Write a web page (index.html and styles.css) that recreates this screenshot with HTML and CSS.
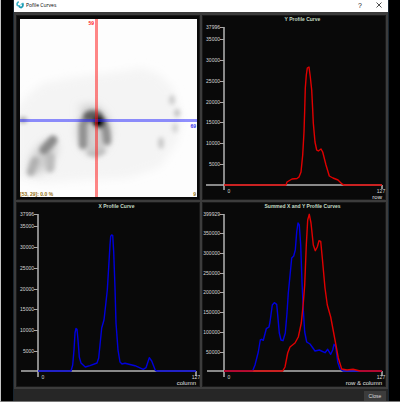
FILE: index.html
```html
<!DOCTYPE html>
<html lang="en">
<head>
<meta charset="utf-8">
<title>Pofile Curves</title>
<link rel="stylesheet" href="styles.css">
</head>
<body>
<div class="window">
  <header class="titlebar">
    <svg class="logo" viewBox="0 0 8 8" aria-hidden="true">
      <path d="M2.800.8C.9 1.600.6 3.600 1.900 5" fill="none" stroke="#3fb4c8" stroke-width="1.700"/>
      <path d="M2.600 4.200C3 5.600 4 6.300 5.200 6.600 6.800 5.600 7.300 3.800 6.600 2.200" fill="none" stroke="#1a9cb4" stroke-width="1.700"/>
      <path d="M4.600 4.200 6.400 1.800" stroke="#4cc0d0" stroke-width="1"/>
    </svg>
    <h1>Pofile Curves</h1>
    <button class="tool" type="button" aria-label="Help">?</button>
    <button class="tool" type="button" aria-label="Close window"><svg viewBox="0 0 6 6" width="6" height="6"><path d="M.5.5 5.500 5.500M5.500.5.5 5.500" stroke="#222" stroke-width=".8"/></svg></button>
  </header>
  <main class="grid">
    <figure class="panel">
      <svg class="plot" viewBox="0 0 184 185">
        <defs>
          <clipPath id="scan"><rect x="4" y="4" width="177" height="178"/></clipPath>
          <filter id="b1" x="-100%" y="-100%" width="300%" height="300%"><feGaussianBlur stdDeviation="2.300"/></filter>
          <filter id="b2" x="-50%" y="-50%" width="200%" height="200%"><feGaussianBlur stdDeviation="4"/></filter>
        </defs>
        <rect x="4" y="4" width="177" height="178" fill="#fdfdfd"/>
        <g clip-path="url(#scan)">
          <path filter="url(#b2)" fill="#f4f4f4" d="M0 94 14 78 27 68 61 62 94 58 127 53 144 60 157 73 164 95 166 105 161 128 144 152 111 163 61 165 27 168 0 162z"/>
          <g filter="url(#b2)">
            <ellipse cx="78" cy="116" rx="17" ry="23" fill="#bbb" opacity=".7"/>
            <ellipse cx="27" cy="142" rx="10" ry="20" fill="#c4c4c4" opacity=".8" transform="rotate(35 27 142)"/>
            <ellipse cx="73" cy="93" rx="11" ry="3" fill="#ccc"/>
          </g>
          <g filter="url(#b1)">
            <path d="M37 125 28 135" stroke="#8a8a8a" stroke-width="9" stroke-linecap="round"/>
            <path d="M19 146 15 157" stroke="#b0b0b0" stroke-width="8" stroke-linecap="round"/>
            <path d="M34 142 34 153" stroke="#bcbcbc" stroke-width="9" stroke-linecap="round"/>
            <path d="M67 130V110Q70 100 80 102T91 126" fill="none" stroke="#909090" stroke-width="8" stroke-linecap="round"/>
            <path d="M72 136Q80 142 88 134" fill="none" stroke="#c0c0c0" stroke-width="7"/>
            <ellipse cx="79" cy="123" rx="4" ry="9" fill="#d4d4d4"/>
            <ellipse cx="77" cy="101" rx="10" ry="6" fill="#505050" opacity=".8"/>
            <circle cx="83" cy="107" r="6" fill="#000"/>
            <ellipse cx="7" cy="105" rx="4" ry="3" fill="#aaa"/>
            <ellipse cx="156" cy="85" rx="3" ry="5" fill="#ccc"/>
            <ellipse cx="161" cy="98" rx="3" ry="4" fill="#c4c4c4"/>
            <ellipse cx="159" cy="113" rx="3" ry="5" fill="#d4d4d4"/>
            <ellipse cx="145" cy="128" rx="3" ry="6" fill="#c8c8c8"/>
          </g>
        </g>
        <rect x="4" y="104" width="177" height="3" fill="#2222ff" opacity=".5"/>
        <rect x="79" y="4" width="3" height="178" fill="#ff1010" opacity=".5"/>
        <g class="mark">
          <text class="red end" x="78" y="10">59</text>
          <text class="blue end" x="180" y="113">69</text>
          <text class="gold" x="4" y="181">[53, 29]: 0.0 %</text>
          <text class="gold end" x="180" y="181">9</text>
        </g>
      </svg>
    </figure>

    <figure class="panel">
      <figcaption>Y Profile Curve</figcaption>
      <svg class="plot" viewBox="0 10 184 175">
        <path class="axis" d="M4 170H180M22 12V175M180 170V174"/>
        <path class="tick" d="M18 12.500H22M18 24.500H22M18 45.500H22M18 66.500H22M18 87.500H22M18 107.500H22M18 128.500H22M18 149.500H22"/>
        <g class="label end">
          <text x="18" y="14">37996</text><text x="18" y="26">35000</text><text x="18" y="47">30000</text><text x="18" y="68">25000</text>
          <text x="18" y="89">20000</text><text x="18" y="109">15000</text><text x="18" y="130">10000</text><text x="18" y="151">5000</text>
        </g>
        <g class="label mid"><text x="27" y="178">0</text><text x="179" y="178">127</text></g>
        <text class="unit end" x="180" y="184">row</text>
        <polyline class="curve y" points="22,170 84,170 85,167 90,164 95,163.500 97,162 99,157 100.700,140 102,117 102.700,95 103.300,73 104.300,60 105.300,53 107,52 108.300,62 109.700,75 110.700,95 111.300,108 113,127 114.700,135 116.300,136 119,134 120.700,137 124,150 127.300,161 131,163 136,165 140,169 142,170 180,170"/>
      </svg>
    </figure>

    <figure class="panel">
      <figcaption>X Profile Curve</figcaption>
      <svg class="plot" viewBox="0 10 184 175">
        <path class="axis" d="M5 169H180M22 12V175M180 169V174"/>
        <path class="tick" d="M18 12.500H22M18 24.500H22M18 45.500H22M18 66.500H22M18 87.500H22M18 107.500H22M18 128.500H22M18 149.500H22"/>
        <g class="label end">
          <text x="18" y="14">37996</text><text x="18" y="26">35000</text><text x="18" y="47">30000</text><text x="18" y="68">25000</text>
          <text x="18" y="89">20000</text><text x="18" y="109">15000</text><text x="18" y="130">10000</text><text x="18" y="151">5000</text>
        </g>
        <g class="label mid"><text x="27" y="177">0</text><text x="180" y="177">127</text></g>
        <text class="unit end" x="180" y="183">column</text>
        <polyline class="curve x" points="22,169 55,169 56.700,163 58,148 59,131 60,126.500 61,127.300 62,138 63.300,155 65,161 69.300,165 74,163.700 81,161 82.700,156 84,143 85.700,126 88,118 90,100 91.300,88 92.700,65 94,43 94.700,34.300 95.700,33 96.700,33.300 97.700,50 99,86 100,121 102,148 104,160 106,162 109,161.300 119,163.700 127.300,167.300 130,165.700 133.300,155.700 135.700,159 139.300,168.300 141,169 180,169"/>
      </svg>
    </figure>

    <figure class="panel">
      <figcaption>Summed X and Y Profile Curves</figcaption>
      <svg class="plot" viewBox="0 10 184 175">
        <path class="tick" d="M18 12.500H22M18 31.500H22M18 51.500H22M18 71.500H22M18 90.500H22M18 110.500H22M18 130.500H22M18 150.500H22"/>
        <g class="label end">
          <text x="18" y="14">399929</text><text x="18" y="33">350000</text><text x="18" y="53">300000</text><text x="18" y="73">250000</text>
          <text x="18" y="92">200000</text><text x="18" y="112">150000</text><text x="18" y="132">100000</text><text x="18" y="152">50000</text>
        </g>
        <path class="axis" d="M5 169H180M22 12V175M180 169V174"/>
        <g class="label mid"><text x="27" y="177">0</text><text x="179" y="177">127</text></g>
        <text class="unit end" x="180" y="183">row &amp; column</text>
        <polyline class="curve x" points="22,169 50.700,168.700 53,163 56.300,150 58.300,138 59.700,137.300 61.300,138.300 64.300,126.700 67,125 68,120 70.300,103 72.300,100.700 74.700,102.300 75.700,113 77.300,131 79,138 81,138.700 83.300,131 85,111 86.300,91 87.300,81 89.700,56 91.700,54 93.300,48 94.700,30 96,21 97.300,23 98.700,43 100,80 101.300,108 102.700,130 104.700,140 108,142 113,149 117.300,148 123,150.700 125.700,147.300 128.700,152.300 130.700,148 132,142.300 133.700,144.700 135.700,160 138,167 141,169 180,169"/>
        <polyline class="curve y" points="22,169 80.700,169 83,165 85.700,151 88,145 93,141 96.300,135 99.300,121 101.300,101 102.700,83 104.300,43 105.700,18 107.300,12.300 109,21 111.300,43 113.300,48.700 115.300,45 117,38.700 118.700,39.300 120.300,56 123,86 125.300,103 128.700,115 133,138 136.300,156 139.700,167 145,168 151,167.300 158,169 180,169"/>
      </svg>
    </figure>
  </main>
  <footer class="footer"><button class="close" type="button">Close</button></footer>
</div>
</body>
</html>
```

FILE: styles.css
```css
* { box-sizing: border-box; }

body {
  margin: 0;
  padding: 0 11px 0 12px;
  background: #000;
  border-left: 1px solid #c4c4c4;
  border-bottom: 1px solid #777;
  font-family: "Liberation Sans", sans-serif;
  font-size: 5px;
}

.window {
  border: solid #182530;
  border-width: 0 1px;
  background: #3c3c3c;
}

.titlebar {
  display: flex;
  align-items: center;
  height: 12px;
  padding: 0 6px 2px 2px;
  background: #fff;
}

.logo { width: 8px; height: 8px; margin-right: 2px; }

h1 {
  flex: 1;
  margin: 0;
  font: 5px/10px "Open Sans", sans-serif;
  color: #000;
}

button {
  padding: 0;
  border: 0;
  font-family: inherit;
}

.tool {
  display: flex;
  align-items: center;
  justify-content: center;
  width: 6px;
  height: 10px;
  margin-left: 13px;
  background: none;
  font-size: 7px;
  color: #222;
}

.grid {
  display: grid;
  grid-template-columns: 1fr 1fr;
  gap: 2px;
  padding: 3px 2px 2px;
}

.panel {
  margin: 0;
  background: #090909;
  box-shadow: inset 0 0 0 1px #191919;
}

figcaption {
  height: 10px;
  padding-left: 17px;
  text-align: center;
  font-weight: bold;
  line-height: 9px;
  color: #c4dcc4;
}

.plot { display: block; width: 100%; }

.axis { fill: none; stroke: #b4b4b4; stroke-width: 1.5; }
.tick { fill: none; stroke: #a8a8a8; stroke-width: 1; }
.label { font-size: 5px; fill: #d8d8d8; }
.unit { font-size: 6px; fill: #e0e0e0; }
.mark { font-size: 5px; font-weight: bold; }
.end { text-anchor: end; }
.mid { text-anchor: middle; }

.red { fill: #f22; }
.blue { fill: #33e; }
.gold { fill: #967010; }

.curve { fill: none; stroke-width: 1.4; stroke-linejoin: round; }
.curve.x { stroke: #0000dc; }
.curve.y { stroke: #e00000; }

.footer {
  display: flex;
  justify-content: flex-end;
  padding: 2px 2px 0;
  background: #262626;
}

.close {
  width: 22px;
  height: 10px;
  background: #3c3c3c;
  font-size: 5px;
  color: #ddd;
}
```
